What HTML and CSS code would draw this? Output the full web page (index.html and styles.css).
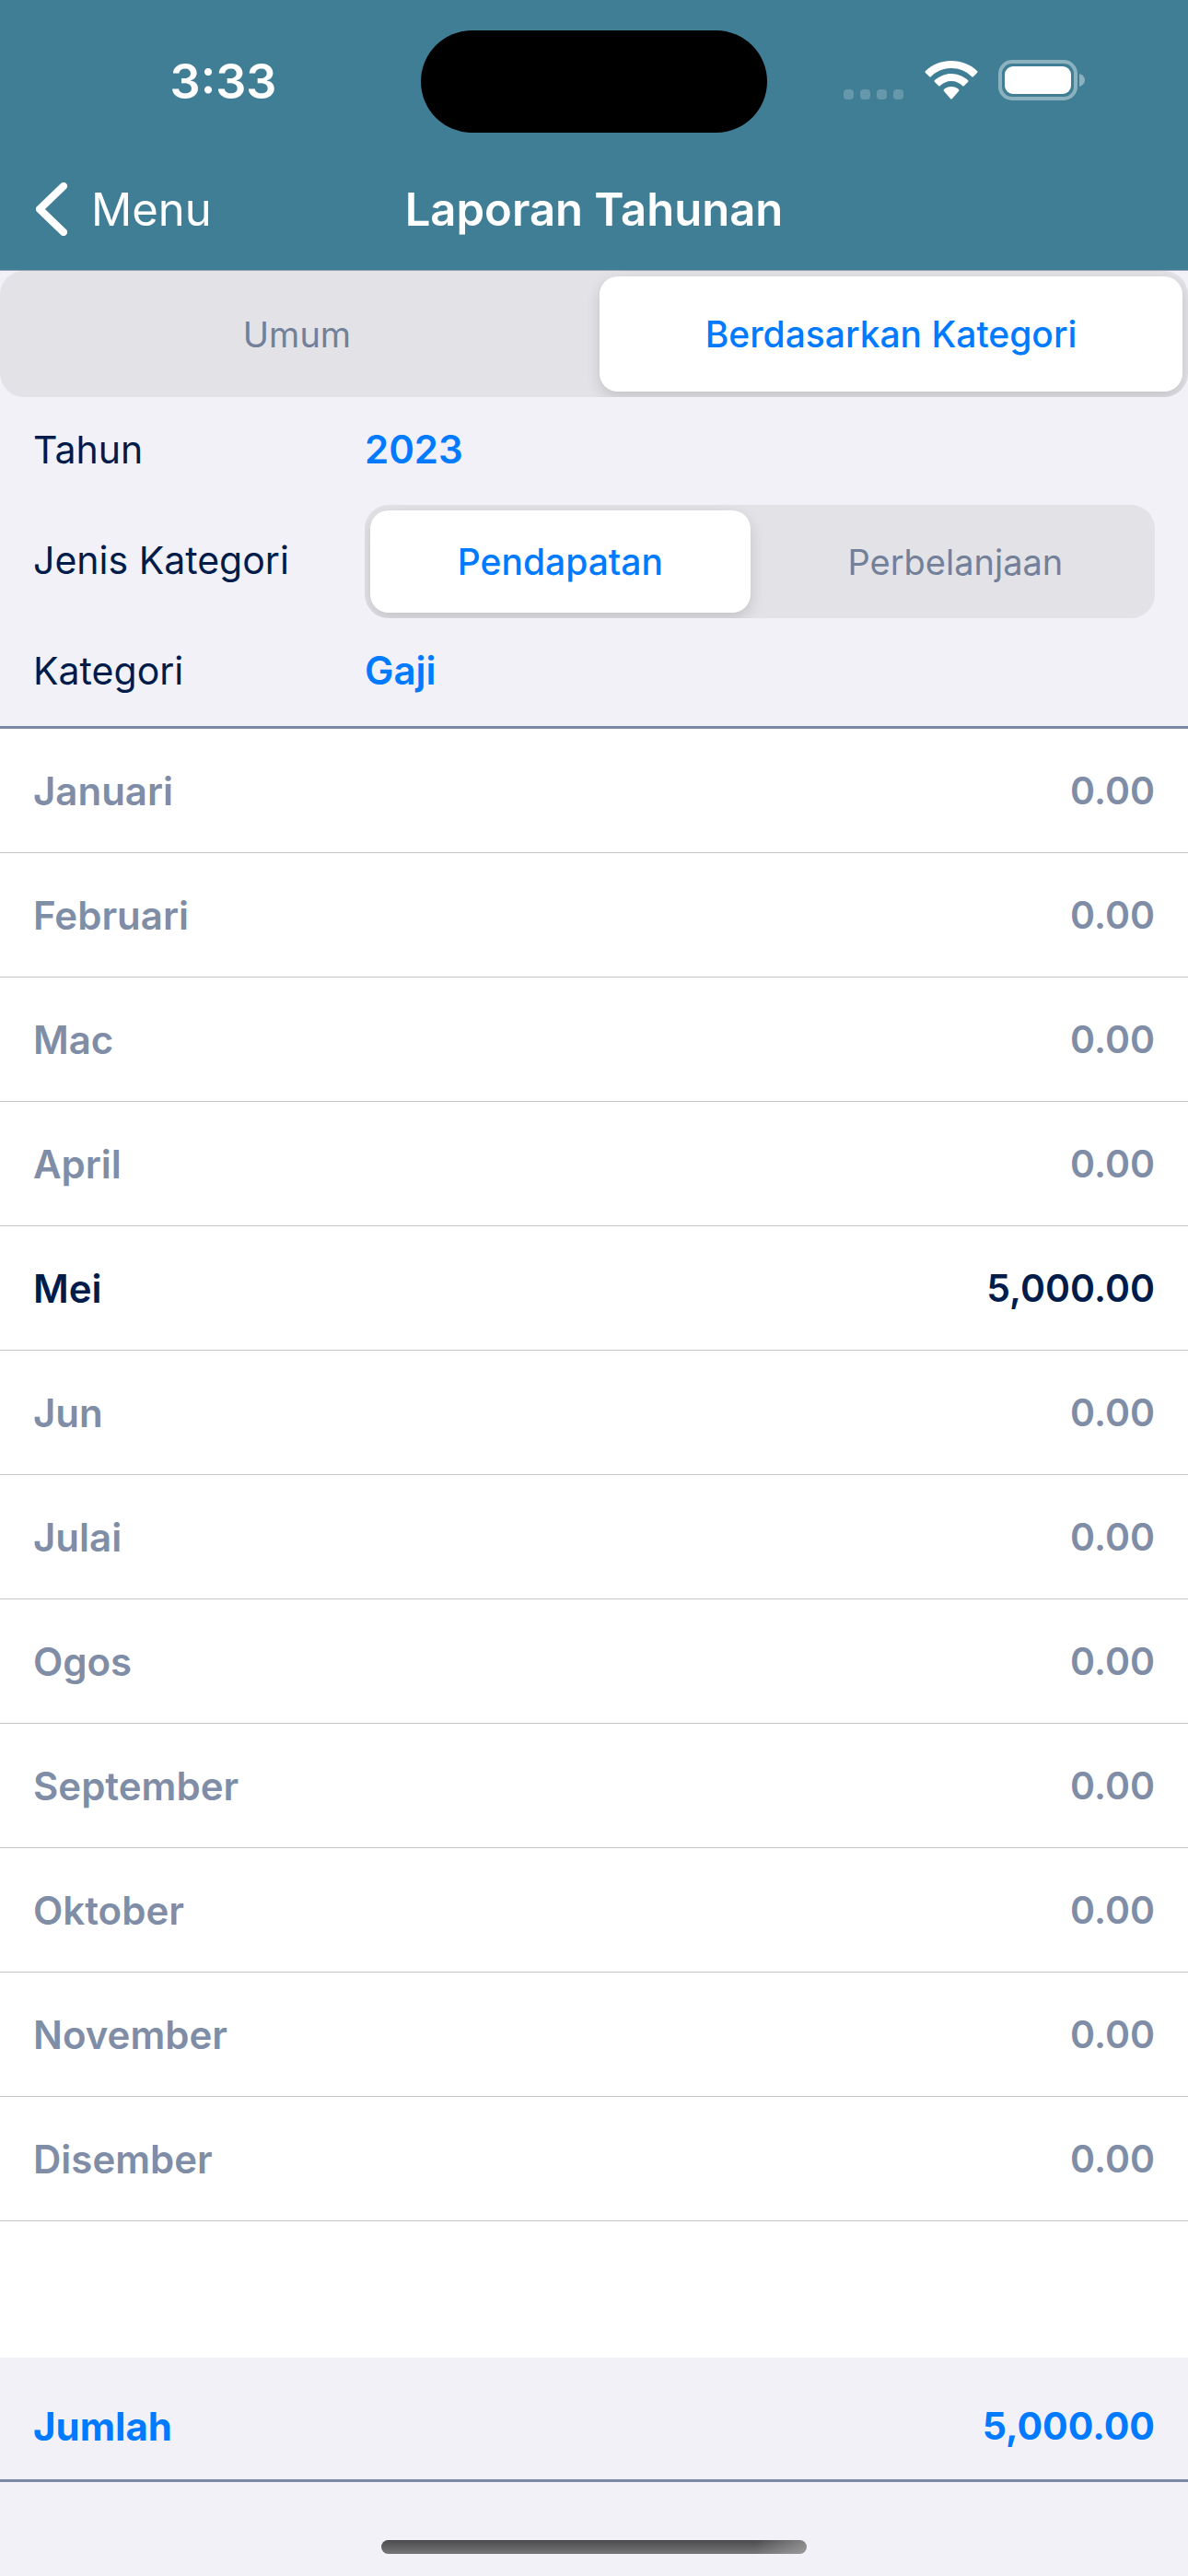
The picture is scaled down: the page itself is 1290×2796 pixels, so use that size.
FILE: index.html
```html
<!DOCTYPE html>
<html lang="ms">
<head>
<meta charset="utf-8">
<meta name="viewport" content="width=device-width, initial-scale=1">
<title>Laporan Tahunan</title>
<link rel="stylesheet" href="styles.css">
</head>
<body>

<header class="header">
  <div class="statusbar">
    <div class="clock">3:33</div>
    <div class="island"></div>
    <div class="status-icons">
      <svg class="dots" width="66" height="44" viewBox="0 0 66 44">
        <rect x="0" y="32" width="11" height="11" rx="4"/>
        <rect x="18" y="32" width="11" height="11" rx="4"/>
        <rect x="36" y="32" width="11" height="11" rx="4"/>
        <rect x="54" y="32" width="11" height="11" rx="4"/>
      </svg>
      <svg class="wifi" width="58" height="44" viewBox="0 0 58 44">
        <path d="M29 1C40 1 50 5 57 12Q58 13 57 14L53 18Q52 19 51 18C45 12 37 9 29 9S13 12 7 18Q6 19 5 18L1 14Q0 13 1 12C8 5 18 1 29 1Z"/>
        <path d="M29 15C36 15 42 18 47 22Q48 23 47 24L43 28Q42 29 41 28C38 25 34 23 29 23S20 25 17 28Q16 29 15 28L11 24Q10 23 11 22C16 18 22 15 29 15Z"/>
        <path d="M29 29C32 29 35 30 37 32Q38 33 37 34L30 42Q29 43 28 42L21 34Q20 33 21 32C23 30 26 29 29 29Z"/>
      </svg>
      <svg class="battery" width="95" height="44" viewBox="0 0 95 44">
        <rect class="case" x="2" y="2" width="82" height="40" rx="13"/>
        <rect class="level" x="7" y="7" width="72" height="30" rx="9"/>
        <path class="cap" d="M88 15Q94 17 94 22T88 29Z"/>
      </svg>
    </div>
  </div>
  <nav class="navbar">
    <a class="back" href="#">
      <svg width="34" height="58" viewBox="0 0 34 58"><path d="M30 4L4 29L30 54"/></svg>
      Menu
    </a>
    <h1 class="title">Laporan Tahunan</h1>
  </nav>
</header>

<main class="content">
  <form class="filters">
    <div class="segment" role="radiogroup" aria-label="Laporan">
      <label class="option"><input type="radio" name="report"><span>Umum</span></label>
      <label class="option"><input type="radio" name="report" checked><span>Berdasarkan Kategori</span></label>
    </div>
    <div class="fields">
      <label class="field-name" for="year">Tahun</label>
      <select id="year"><option>2023</option></select>

      <span class="field-name" id="typelabel">Jenis Kategori</span>
      <div class="segment" role="radiogroup" aria-labelledby="typelabel">
        <label class="option"><input type="radio" name="type" checked><span>Pendapatan</span></label>
        <label class="option"><input type="radio" name="type"><span>Perbelanjaan</span></label>
      </div>

      <label class="field-name" for="category">Kategori</label>
      <select id="category"><option>Gaji</option></select>
    </div>
  </form>

  <table class="months">
    <tr><th scope="row">Januari</th><td>0.00</td></tr>
    <tr><th scope="row">Februari</th><td>0.00</td></tr>
    <tr><th scope="row">Mac</th><td>0.00</td></tr>
    <tr><th scope="row">April</th><td>0.00</td></tr>
    <tr class="filled"><th scope="row">Mei</th><td>5,000.00</td></tr>
    <tr><th scope="row">Jun</th><td>0.00</td></tr>
    <tr><th scope="row">Julai</th><td>0.00</td></tr>
    <tr><th scope="row">Ogos</th><td>0.00</td></tr>
    <tr><th scope="row">September</th><td>0.00</td></tr>
    <tr><th scope="row">Oktober</th><td>0.00</td></tr>
    <tr><th scope="row">November</th><td>0.00</td></tr>
    <tr><th scope="row">Disember</th><td>0.00</td></tr>
  </table>
</main>

<footer class="footer">
  <div class="total"><span class="total-name">Jumlah</span><span>5,000.00</span></div>
  <div class="home"><div class="home-bar"></div></div>
</footer>

</body>
</html>
```

FILE: styles.css
```css
* {
  box-sizing: border-box;
}
body {
  margin: 0;
  min-height: 100vh;
  display: flex;
  flex-direction: column;
  background-color: #fff;
  color: #001c4b;
  font-family: Inter, "Liberation Sans", sans-serif;
  font-size: 41px;
}

/* header */
.header {
  background-color: #407e96;
  border-bottom: 1px solid #8fa3b0;
  color: #fff;
}
.statusbar {
  display: grid;
  grid-template-columns: 1fr 376px 1fr;
  align-items: center;
  height: 177px;
}
.clock {
  padding-left: 28px;
  text-align: center;
  font-size: 52px;
  font-weight: 600;
}
.island {
  height: 111px;
  border-radius: 56px;
  background-color: #000;
}
.status-icons {
  display: flex;
  justify-content: center;
  gap: 22px;
  padding: 0 28px 4px 0;
}
.dots {
  fill: #6698ab;
}
.wifi,
.level {
  fill: #fff;
}
.case {
  fill: none;
  stroke: #8cb2c0;
  stroke-width: 4px;
}
.cap {
  fill: #8cb2c0;
}
.navbar {
  display: grid;
  grid-template-columns: 1fr auto 1fr;
  align-items: center;
  height: 116px;
  padding: 0 39px 16px;
}
.back {
  display: flex;
  align-items: center;
  gap: 26px;
  color: #fff;
  font-size: 49px;
  text-decoration: none;
}
.back path {
  fill: none;
  stroke: #fff;
  stroke-width: 8px;
  stroke-linecap: round;
  stroke-linejoin: round;
}
.title {
  margin: 0;
  font-size: 49px;
  font-weight: 600;
}

/* filters */
.filters {
  background-color: #f2f1f7;
  border-bottom: 3px solid #7b88a5;
}
.segment {
  display: grid;
  grid-template-columns: 1fr 1fr;
  overflow: hidden;
  border-radius: 26px;
  background-color: #e3e2e7;
}
.option {
  display: grid;
  padding: 6px;
}
.option input {
  grid-area: 1 / 1;
  appearance: none;
  margin: 0;
}
.option span {
  grid-area: 1 / 1;
  display: grid;
  place-items: center;
  height: 111px;
  border-radius: 20px;
  color: #73809a;
  font-size: 38px;
}
.option input:checked + span {
  background-color: #fff;
  box-shadow: 0 6px 16px rgba(0, 0, 0, 0.14);
  color: #007aff;
  font-size: 39px;
  font-weight: 500;
}
.filters > .segment span {
  height: 125px;
}
.fields {
  display: grid;
  grid-template-columns: 360px 1fr;
  grid-template-rows: 117px 123px 117px;
  align-items: center;
  padding: 0 36px;
}
.fields .segment {
  grid-template-columns: 99fr 101fr;
}
.field-name {
  padding-bottom: 4px;
}
.fields select {
  appearance: none;
  padding: 0 0 4px;
  border: 0;
  background: none;
  color: #007aff;
  font: inherit;
  font-size: 42px;
  font-weight: 600;
}

/* months */
.months {
  width: 100%;
  border-spacing: 0;
  color: #7f8da6;
}
.months th,
.months td {
  height: 135px;
  padding: 0 36px;
  border-bottom: 1px solid #c6c6c8;
  font-weight: 600;
  text-align: left;
}
.months th {
  font-size: 42px;
}
.months td {
  text-align: right;
}
.months .filled {
  color: #001c4b;
}

/* footer */
.content {
  flex: 1;
}
.footer {
  background-color: #f2f1f7;
}
.total {
  display: flex;
  justify-content: space-between;
  align-items: center;
  height: 135px;
  padding: 16px 36px 0;
  border-bottom: 3px solid #7b88a5;
  color: #007aff;
  font-weight: 700;
}
.total-name {
  font-size: 42px;
}
.home {
  padding: 63px 0 24px;
}
.home-bar {
  width: 462px;
  height: 15px;
  margin: 0 auto;
  border-radius: 8px;
  background:
    linear-gradient(to right, transparent 88%, rgba(190, 190, 190, 0.5)),
    linear-gradient(#4a4a4c, #77777a);
}
```
